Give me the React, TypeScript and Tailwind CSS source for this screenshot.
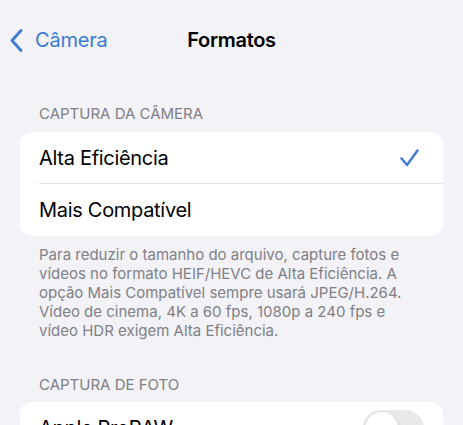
import React from "react"

const BLUE = "#3b7bd6"

function BackChevron() {
  return (
    <svg width="13" height="23" viewBox="0 0 13 23" fill="none">
      <path d="M11 1.5 L2 11.5 L11 21.5" stroke={BLUE} strokeWidth="2.8" strokeLinecap="round" strokeLinejoin="round" />
    </svg>
  )
}

function Check() {
  return (
    <svg width="19" height="18" viewBox="0 0 19 18" fill="none">
      <path d="M1.5 9.5 L7 16 L17.5 1.5" stroke={BLUE} strokeWidth="2.4" strokeLinecap="round" strokeLinejoin="round" />
    </svg>
  )
}

function Toggle() {
  return (
    <div className="w-[61px] h-[37px] rounded-full bg-[#e9e9eb] p-[2px] flex">
      <div className="w-[33px] h-[33px] rounded-full bg-white shadow-[0_2px_5px_rgba(0,0,0,0.18)]" />
    </div>
  )
}

export default function App() {
  return (
    <div
      className="w-[463px] h-[425px] overflow-hidden bg-[#f2f2f7] text-black"
      style={{ fontFamily: "Inter, 'Noto Sans', sans-serif" }}
    >
      {/* nav bar */}
      <div className="h-[80px] grid grid-cols-[1fr_auto_1fr] items-center">
        <div className="flex items-center gap-[12px] pl-[10px]">
          <BackChevron />
          <span className="text-[20px] tracking-[-0.2px]" style={{ color: BLUE }}>Câmera</span>
        </div>
        <span className="text-[20px] font-semibold tracking-[-0.3px]">Formatos</span>
        <div />
      </div>

      <div className="mt-[25px] pl-[39px] text-[15px] leading-[18px] text-[#808085] uppercase">
        Captura da Câmera
      </div>

      <div className="mx-[20px] mt-[9px] rounded-[12px] bg-white">
        <div className="h-[51px] pl-[19px] pr-[24px] flex items-center justify-between">
          <span className="text-[20px] tracking-[-0.3px]">Alta Eficiência</span>
          <Check />
        </div>
        <div className="ml-[19px] border-t border-[#e2e2e6]" />
        <div className="h-[52px] pl-[19px] flex items-center">
          <span className="text-[20px] tracking-[-0.3px]">Mais Compatível</span>
        </div>
      </div>

      <p className="pt-[9px] pl-[39px] pr-[50px] text-[15px] leading-[19px] text-[#808085]">
        Para reduzir o tamanho do arquivo, capture fotos e vídeos no formato HEIF/HEVC de Alta Eficiência. A
        opção Mais Compatível sempre usará JPEG/H.264. Vídeo de cinema, 4K a 60 fps, 1080p a 240 fps e vídeo
        HDR exigem Alta Eficiência.
      </p>

      <div className="mt-[36px] pl-[39px] text-[15px] leading-[18px] text-[#808085] uppercase">
        Captura de Foto
      </div>

      <div className="mx-[20px] mt-[8px] rounded-[12px] bg-white">
        <div className="h-[52px] pl-[19px] pr-[19px] flex items-center justify-between">
          <span className="text-[20px] tracking-[-0.3px]">Apple ProRAW</span>
          <Toggle />
        </div>
      </div>
    </div>
  )
}
